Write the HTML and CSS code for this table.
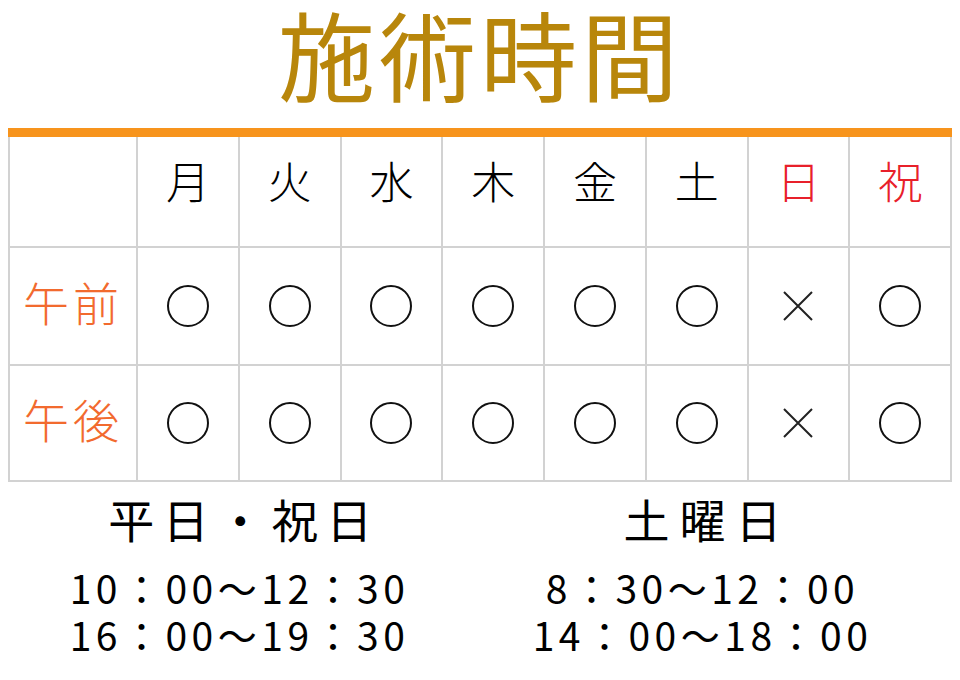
FILE: index.html
```html
<!DOCTYPE html>
<html lang="ja">
<head>
  <meta charset="UTF-8">
  <meta name="viewport" content="width=device-width, initial-scale=1.0">
  <title>施術時間</title>
  <link rel="stylesheet" href="styles.css">
</head>
<body>
  <h1 class="title">施術時間</h1>

  <table class="schedule">
    <tr class="head-row">
      <th class="label"></th>
      <th>月</th>
      <th>火</th>
      <th>水</th>
      <th>木</th>
      <th>金</th>
      <th>土</th>
      <th class="holiday">日</th>
      <th class="holiday">祝</th>
    </tr>
    <tr class="am-row">
      <th class="label">午前</th>
      <td><span class="open"></span></td>
      <td><span class="open"></span></td>
      <td><span class="open"></span></td>
      <td><span class="open"></span></td>
      <td><span class="open"></span></td>
      <td><span class="open"></span></td>
      <td><svg class="closed" viewBox="0 0 30 30"><path d="M1 1L29 29M29 1L1 29"/></svg></td>
      <td><span class="open"></span></td>
    </tr>
    <tr class="pm-row">
      <th class="label">午後</th>
      <td><span class="open"></span></td>
      <td><span class="open"></span></td>
      <td><span class="open"></span></td>
      <td><span class="open"></span></td>
      <td><span class="open"></span></td>
      <td><span class="open"></span></td>
      <td><svg class="closed" viewBox="0 0 30 30"><path d="M1 1L29 29M29 1L1 29"/></svg></td>
      <td><span class="open"></span></td>
    </tr>
  </table>

  <div class="hours">
    <div class="hours-col weekday">
      <div class="hours-title">平日・祝日</div>
      <div class="hours-time">10：00〜12：30</div>
      <div class="hours-time">16：00〜19：30</div>
    </div>
    <div class="hours-col saturday">
      <div class="hours-title">土曜日</div>
      <div class="hours-time">8：30〜12：00</div>
      <div class="hours-time">14：00〜18：00</div>
    </div>
  </div>
</body>
</html>
```

FILE: styles.css
```css
body {
  margin: 0 8px 8px;
  font-family: "Noto Sans CJK JP", "Noto Sans", sans-serif;
  background-color: #fff;
  color: #000;
}

.title {
  margin: 0;
  height: 128px;
  font-size: 97px;
  line-height: 104px;
  font-weight: 400;
  letter-spacing: 4px;
  text-align: center;
  color: #b8860b;
}

.schedule {
  width: 944px;
  border-collapse: collapse;
  table-layout: fixed;
  border-top: 9px solid #f7941d;
}

.schedule th,
.schedule td {
  padding: 0;
  border: 2px solid #d2d2d2;
  text-align: center;
  vertical-align: middle;
  font-weight: 300;
}

.schedule .label {
  width: 126px;
}

.head-row {
  height: 114px;
}

.head-row th {
  padding-bottom: 22px;
  font-size: 44px;
}

.am-row {
  height: 118px;
}

.pm-row {
  height: 116px;
}

.schedule td .open,
.schedule td .closed {
  display: inline-block;
  vertical-align: middle;
}

th.holiday {
  color: #e8202a;
}

tr th.label {
  font-size: 46px;
  letter-spacing: 4px;
  color: #f26a2e;
  padding-bottom: 10px;
}

.open {
  width: 38px;
  height: 38px;
  border: 2px solid #111;
  border-radius: 50%;
}

.closed {
  width: 30px;
  height: 30px;
  stroke: #222;
  stroke-width: 2;
  fill: none;
}

.hours {
  display: flex;
  padding-top: 9px;
}

.hours-col {
  flex: 1;
  text-align: center;
}

.saturday {
  padding-right: 18px;
}

.hours-title {
  font-size: 46px;
  line-height: 54px;
  margin-bottom: 19px;
}

.weekday .hours-title {
  padding-left: 10px;
  letter-spacing: 8.5px;
}

.saturday .hours-title {
  padding-left: 10px;
  letter-spacing: 10px;
}

.hours-time {
  font-size: 39px;
  line-height: 47px;
  letter-spacing: 4.5px;
}
```
